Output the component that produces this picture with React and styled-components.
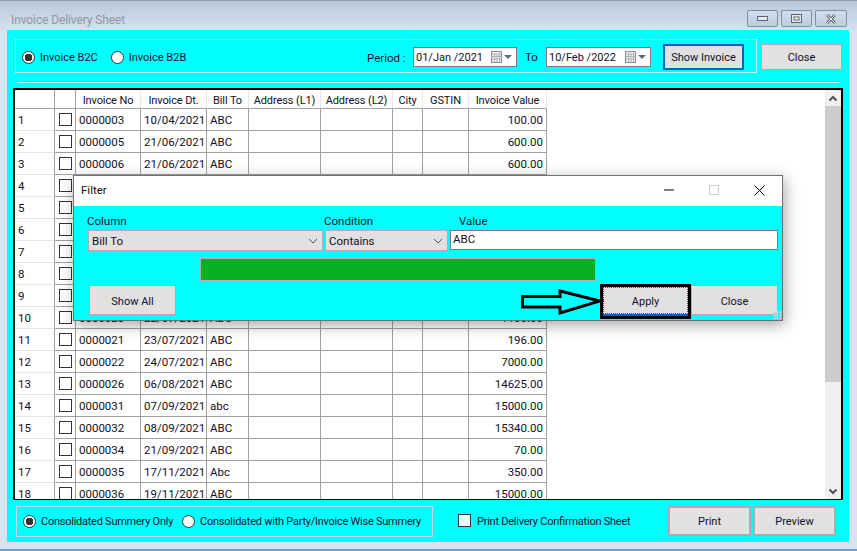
import React from 'react';
import styled, { createGlobalStyle } from 'styled-components';

const rows = [
    ['0000003', '10/04/2021', 'ABC', '100.00'],
    ['0000005', '21/06/2021', 'ABC', '600.00'],
    ['0000006', '21/06/2021', 'ABC', '600.00'],
    ['', '', '', ''],
    ['', '', '', ''],
    ['', '', '', ''],
    ['', '', '', ''],
    ['', '', '', ''],
    ['', '', '', ''],
    ['0000020', '22/07/2021', 'ABC', '1100.00'],
    ['0000021', '23/07/2021', 'ABC', '196.00'],
    ['0000022', '24/07/2021', 'ABC', '7000.00'],
    ['0000026', '06/08/2021', 'ABC', '14625.00'],
    ['0000031', '07/09/2021', 'abc', '15000.00'],
    ['0000032', '08/09/2021', 'ABC', '15340.00'],
    ['0000034', '21/09/2021', 'ABC', '70.00'],
    ['0000035', '17/11/2021', 'Abc', '350.00'],
    ['0000036', '19/11/2021', 'ABC', '15000.00'],
];

const columns = [
    { label: '', width: 40 },
    { label: '', width: 21 },
    { label: 'Invoice No', width: 65 },
    { label: 'Invoice Dt.', width: 66 },
    { label: 'Bill To', width: 42 },
    { label: 'Address (L1)', width: 72 },
    { label: 'Address (L2)', width: 72 },
    { label: 'City', width: 30 },
    { label: 'GSTIN', width: 46 },
    { label: 'Invoice Value', width: 78 },
];

const CalendarIcon = () => (
    <svg width="22" height="12" viewBox="0 0 22 12">
        <rect x="0.5" y="0.5" width="10" height="11" fill="#e8ecf0" stroke="#8a8f96" />
        <path d="M1 3h9M1 5.5h9M1 8h9M3.5 3v8M6 3v8M8.5 3v8" stroke="#b4b8be" strokeWidth="1" fill="none" />
        <path d="M13 4h8l-4 4z" fill="#5a6a80" />
    </svg>
);

const App = () => {
    return (
        <Window>
            <GlobalStyle />
            <TitleBar>
                <TitleText>Invoice Delivery Sheet</TitleText>
                <WindowButtons>
                    <WindowButton $width={31}>
                        <svg width="11" height="6" viewBox="0 0 11 6"><rect x="0.5" y="0.5" width="10" height="4" fill="#e4e9f0" stroke="#5a6472" /></svg>
                    </WindowButton>
                    <WindowButton $width={31}>
                        <svg width="11" height="10" viewBox="0 0 11 10"><rect x="0.5" y="0.5" width="10" height="8" fill="#e4e9f0" stroke="#5a6472" /><rect x="3" y="3" width="5" height="3" fill="#fff" stroke="#5a6472" strokeWidth="1" /></svg>
                    </WindowButton>
                    <WindowButton $width={32}>
                        <svg width="12" height="10" viewBox="0 0 12 10"><path d="M2 1l8 8M10 1L2 9" stroke="#5f6874" strokeWidth="2.6" fill="none" /><path d="M2 1l8 8M10 1L2 9" stroke="#eef1f5" strokeWidth="1" fill="none" /></svg>
                    </WindowButton>
                </WindowButtons>
            </TitleBar>

            <Client>
                <TopRow>
                    <GroupBox>
                        <Radio $checked />
                        <RadioLabel>Invoice B2C</RadioLabel>
                        <Radio $gap={13} />
                        <RadioLabel>Invoice B2B</RadioLabel>
                        <PeriodLabel>Period :</PeriodLabel>
                        <DateBox $width={104}>
                            <span>01/Jan /2021</span>
                            <CalendarIcon />
                        </DateBox>
                        <ToLabel>To</ToLabel>
                        <DateBox $width={105}>
                            <span>10/Feb /2022</span>
                            <CalendarIcon />
                        </DateBox>
                        <ShowInvoiceButton>Show Invoice</ShowInvoiceButton>
                    </GroupBox>
                    <CloseButton>Close</CloseButton>
                </TopRow>
                <Separator />

                <GridFrame>
                    <GridArea>
                        <InvoiceTable>
                            <colgroup>
                                {columns.map((col, index) => (
                                    <col key={index} style={{ width: col.width }} />
                                ))}
                            </colgroup>
                            <thead>
                                <tr>
                                    {columns.map((col, index) => (
                                        <HeaderCell key={index} $corner={index < 2}>{col.label}</HeaderCell>
                                    ))}
                                </tr>
                            </thead>
                            <tbody>
                                {rows.map((row, index) => (
                                    <tr key={index}>
                                        <RowHeader>{index + 1}</RowHeader>
                                        <Cell $center><CheckBox /></Cell>
                                        <Cell>{row[0]}</Cell>
                                        <Cell>{row[1]}</Cell>
                                        <Cell>{row[2]}</Cell>
                                        <Cell />
                                        <Cell />
                                        <Cell />
                                        <Cell />
                                        <Cell $right>{row[3]}</Cell>
                                    </tr>
                                ))}
                            </tbody>
                        </InvoiceTable>
                    </GridArea>
                    <ScrollBar>
                        <ScrollButton>
                            <svg width="10" height="7" viewBox="0 0 10 7"><path d="M1.5 5.5L5 2l3.5 3.5" stroke="#505050" strokeWidth="2" fill="none" /></svg>
                        </ScrollButton>
                        <ScrollThumb />
                        <ScrollTrack />
                        <ScrollButton>
                            <svg width="10" height="7" viewBox="0 0 10 7"><path d="M1.5 1.5L5 5l3.5-3.5" stroke="#505050" strokeWidth="2" fill="none" /></svg>
                        </ScrollButton>
                    </ScrollBar>
                </GridFrame>

                <BottomRow>
                    <SummaryBox>
                        <Radio $checked />
                        <SummaryLabel>Consolidated Summery Only</SummaryLabel>
                        <Radio $gap={9} />
                        <SummaryLabel>Consolidated with Party/Invoice Wise Summery</SummaryLabel>
                    </SummaryBox>
                    <PrintCheck />
                    <PrintCheckLabel>Print Delivery Confirmation Sheet</PrintCheckLabel>
                    <PrintButton $first>Print</PrintButton>
                    <PrintButton>Preview</PrintButton>
                </BottomRow>
            </Client>

            <Dialog>
                <DialogTitle>
                    <span>Filter</span>
                    <DialogControls>
                        <svg width="10" height="10" viewBox="0 0 10 10"><path d="M0 5h10" stroke="#000" strokeWidth="1" fill="none" /></svg>
                        <svg width="10" height="10" viewBox="0 0 10 10"><rect x="0.5" y="0.5" width="9" height="9" stroke="#ccc" fill="none" /></svg>
                        <svg width="11" height="11" viewBox="0 0 11 11"><path d="M0.5 0.5l10 10M10.5 0.5l-10 10" stroke="#000" strokeWidth="1" fill="none" /></svg>
                    </DialogControls>
                </DialogTitle>
                <DialogBody>
                    <FieldRow>
                        <Field $width={235}>
                            <FieldLabel>Column</FieldLabel>
                            <SelectBox>
                                Bill To
                                <svg width="10" height="6" viewBox="0 0 10 6"><path d="M1 1l4 4 4-4" stroke="#555" strokeWidth="1" fill="none" /></svg>
                            </SelectBox>
                        </Field>
                        <Field $width={123}>
                            <FieldLabel>Condition</FieldLabel>
                            <SelectBox>
                                Contains
                                <svg width="10" height="6" viewBox="0 0 10 6"><path d="M1 1l4 4 4-4" stroke="#555" strokeWidth="1" fill="none" /></svg>
                            </SelectBox>
                        </Field>
                        <Field $width={328}>
                            <FieldLabel $indent={9}>Value</FieldLabel>
                            <ValueBox>ABC</ValueBox>
                        </Field>
                    </FieldRow>
                    <ProgressBar />
                    <ButtonRow>
                        <DialogButton $width={87}>Show All</DialogButton>
                        <RightButtons>
                            <ApplyButton><ApplyInner>Apply</ApplyInner></ApplyButton>
                            <DialogButton $width={87}>Close</DialogButton>
                        </RightButtons>
                    </ButtonRow>
                    <Grip />
                </DialogBody>
            </Dialog>

            <ArrowMark width="84" height="28" viewBox="0 0 84 28">
                <path d="M2.5 7.5H40V2l40 10-40 12v-6H2.5z" fill="none" stroke="#000" strokeWidth="3" />
            </ArrowMark>
        </Window>
    );
};

export default App;

const GlobalStyle = createGlobalStyle`
    html, body {
        margin: 0;
        padding: 0;
        background: #d9e4f1;
    }

    body {
        font-family: Roboto, "Liberation Sans", Arial, sans-serif;
        font-size: 11px;
        color: #10102a;
    }
`;

const Window = styled.div`
    position: relative;
    display: flex;
    flex-direction: column;
    width: 857px;
    height: 551px;
    overflow: hidden;
    background: #d9e4f1;
    box-sizing: border-box;
    border-bottom: 2px solid #6a9fd8;
`;

const TitleBar = styled.div`
    display: flex;
    align-items: flex-start;
    justify-content: space-between;
    height: 30px;
    flex-shrink: 0;
    padding: 9px 10px 0 11px;
    box-sizing: border-box;
    background: linear-gradient(#b9c8da, #d6e1ee);
    border-top: 1px solid #8d9aab;
`;

const TitleText = styled.div`
    margin-top: 3px;
    font-size: 12px;
    letter-spacing: -0.1px;
    color: #8f989f;
`;

const WindowButtons = styled.div`
    display: flex;
    gap: 3px;
`;

const WindowButton = styled.div`
    display: flex;
    align-items: center;
    justify-content: center;
    width: ${({ $width }) => $width}px;
    height: 17px;
    box-sizing: border-box;
    border: 1px solid #7f90a6;
    border-radius: 2px;
    background: linear-gradient(#d3deeb, #bdcbdc);
`;

const Client = styled.div`
    display: flex;
    flex-direction: column;
    width: 842px;
    height: 512px;
    margin-left: 7px;
    padding: 9px 6px 0;
    box-sizing: border-box;
    background: #00ffff;
`;

const TopRow = styled.div`
    display: flex;
    align-items: flex-start;
    margin-left: 2px;
`;

const GroupBox = styled.div`
    display: flex;
    align-items: center;
    width: 742px;
    height: 34px;
    padding: 2px 12px 0 6px;
    box-sizing: border-box;
    border: 1px solid #c4f0f0;
`;

const Radio = styled.span`
    position: relative;
    display: inline-block;
    flex-shrink: 0;
    width: 13px;
    height: 13px;
    margin-left: ${({ $gap }) => $gap || 0}px;
    box-sizing: border-box;
    border: 1px solid #333;
    border-radius: 50%;
    background: ${({ $checked }) => ($checked ? 'radial-gradient(circle, #333 0 3.6px, #fff 4px)' : '#fff')};
`;

const RadioLabel = styled.span`
    margin-left: 5px;
    white-space: nowrap;
`;

const PeriodLabel = styled.span`
    width: 46px;
    margin: 1px 0 0 auto;
    font-size: 11.5px;
    white-space: nowrap;
`;

const ToLabel = styled.span`
    width: 29px;
    padding-left: 8px;
    box-sizing: border-box;
    font-size: 11.5px;
`;

const DateBox = styled.div`
    display: flex;
    align-items: center;
    justify-content: space-between;
    width: ${({ $width }) => $width}px;
    height: 20px;
    padding: 0 3px 0 2px;
    box-sizing: border-box;
    border: 1px solid #7a7a7a;
    background: #fff;
    white-space: nowrap;
`;

const ButtonBase = styled.div`
    display: flex;
    align-items: center;
    justify-content: center;
    box-sizing: border-box;
    border: 1px solid #adadad;
    background: #e1e1e1;
    white-space: nowrap;
`;

const ShowInvoiceButton = styled(ButtonBase)`
    width: 81px;
    height: 26px;
    margin-left: 12px;
    padding-top: 1px;
    border: 2px solid #0a63c4;
`;

const CloseButton = styled(ButtonBase)`
    width: 81px;
    height: 26px;
    margin: 5px 0 0 4px;
`;

const Separator = styled.div`
    height: 1px;
    margin: 8px 3px 6px 4px;
    background: #6fb8bc;
    box-shadow: 0 1px 0 #c8ffff;
`;

const GridFrame = styled.div`
    display: flex;
    height: 412px;
    flex-shrink: 0;
    box-sizing: border-box;
    border: 2px solid #000;
    border-bottom-width: 1px;
    background: #fff;
`;

const GridArea = styled.div`
    flex: 1;
    overflow: hidden;
`;

const InvoiceTable = styled.table`
    table-layout: fixed;
    width: 532px;
    border-collapse: separate;
    border-spacing: 0;
`;

const HeaderCell = styled.th`
    height: 19px;
    padding: 2px 0 0;
    box-sizing: border-box;
    font-weight: normal;
    font-size: 11px;
    letter-spacing: -0.1px;
    white-space: nowrap;
    text-align: center;
    color: #10102a;
    background: #fff;
    border-bottom: 1px solid #a0a0a0;
    border-right: 1px solid ${({ $corner }) => ($corner ? '#a0a0a0' : '#e6e6e6')};
`;

const Cell = styled.td`
    height: 22px;
    padding: ${({ $center }) => ($center ? '0' : '1px 3px 0')};
    box-sizing: border-box;
    overflow: hidden;
    font-size: 11.5px;
    white-space: nowrap;
    text-align: ${({ $right }) => ($right ? 'right' : 'left')};
    border-right: 1px solid #a0a0a0;
    border-bottom: 1px solid #a0a0a0;
`;

const RowHeader = styled.td`
    height: 22px;
    padding: 1px 0 0 3px;
    box-sizing: border-box;
    font-size: 11.5px;
    background: #fff;
    border-right: 1px solid #a0a0a0;
    border-bottom: 1px solid #e6e6e6;
`;

const CheckBox = styled.div`
    width: 13px;
    height: 13px;
    margin: 0 auto;
    box-sizing: border-box;
    border: 1px solid #333;
    background: #fff;
`;

const ScrollBar = styled.div`
    display: flex;
    flex-direction: column;
    width: 16px;
    flex-shrink: 0;
    background: #f0f0f0;
`;

const ScrollButton = styled.div`
    display: flex;
    align-items: center;
    justify-content: center;
    height: 16px;
    flex-shrink: 0;
`;

const ScrollThumb = styled.div`
    height: 276px;
    flex-shrink: 0;
    background: #cdcdcd;
`;

const ScrollTrack = styled.div`
    flex: 1;
`;

const BottomRow = styled.div`
    display: flex;
    align-items: flex-start;
    margin-top: 6px;
    margin-left: 3px;
`;

const SummaryBox = styled.div`
    display: flex;
    align-items: center;
    width: 417px;
    height: 31px;
    padding-left: 6px;
    box-sizing: border-box;
    border: 1px solid #c8d8d8;
`;

const SummaryLabel = styled.span`
    margin-left: 5px;
    letter-spacing: -0.25px;
    white-space: nowrap;
`;

const PrintCheck = styled(CheckBox)`
    flex-shrink: 0;
    margin: 8px 0 0 25px;
`;

const PrintCheckLabel = styled.span`
    margin: 9px 0 0 6px;
    width: 191px;
    letter-spacing: -0.25px;
    white-space: nowrap;
`;

const PrintButton = styled(ButtonBase)`
    width: 83px;
    height: 30px;
    margin-left: ${({ $first }) => ($first ? '0' : '2px')};
    border-width: 2px;
`;

const Dialog = styled.div`
    position: absolute;
    left: 73px;
    top: 175px;
    width: 710px;
    height: 146px;
    display: flex;
    flex-direction: column;
    box-sizing: border-box;
    border: 1px solid #707070;
    background: #00ffff;
    font-size: 11.5px;
    box-shadow: 2px 4px 14px rgba(0, 0, 0, 0.35);
`;

const DialogTitle = styled.div`
    display: flex;
    align-items: center;
    justify-content: space-between;
    height: 30px;
    flex-shrink: 0;
    padding: 0 17px 2px 7px;
    box-sizing: border-box;
    background: #fff;
    color: #111;
`;

const DialogControls = styled.div`
    display: flex;
    align-items: center;
    gap: 35px;
`;

const DialogBody = styled.div`
    position: relative;
    flex: 1;
    padding: 9px 4px 0 14px;
    box-sizing: border-box;
`;

const FieldRow = styled.div`
    display: flex;
    gap: 2px;
`;

const Field = styled.div`
    width: ${({ $width }) => $width}px;
    flex-shrink: 0;
`;

const FieldLabel = styled.div`
    height: 15px;
    margin-left: ${({ $indent }) => $indent || -1}px;
    line-height: 13px;
    white-space: nowrap;
`;

const SelectBox = styled.div`
    display: flex;
    align-items: center;
    justify-content: space-between;
    height: 21px;
    padding: 0 4px 0 3px;
    box-sizing: border-box;
    border: 1px solid #adadad;
    background: #e1e1e1;
`;

const ValueBox = styled.div`
    height: 20px;
    padding-left: 2px;
    line-height: 17px;
    box-sizing: border-box;
    border: 1px solid #7a7a7a;
    background: #fff;
`;

const ProgressBar = styled.div`
    width: 396px;
    height: 23px;
    margin: 7px 0 0 112px;
    box-sizing: border-box;
    border: 1px solid #b0b0b0;
    background: #06b025;
`;

const ButtonRow = styled.div`
    display: flex;
    align-items: flex-start;
    justify-content: space-between;
    margin: 4px 0 0 1px;
    font-size: 11px;
`;

const RightButtons = styled.div`
    display: flex;
`;

const DialogButton = styled(ButtonBase)`
    width: ${({ $width }) => $width}px;
    height: 30px;
    padding-top: 2px;
`;

const ApplyButton = styled.div`
    width: 91px;
    height: 35px;
    margin-top: -1px;
    box-sizing: border-box;
    border: 3px solid #000;
    background: #0a5fc0;
`;

const ApplyInner = styled(ButtonBase)`
    width: 85px;
    height: 27px;
    padding-top: 1px;
    border: 1px dotted #a02040;
`;

const Grip = styled.div`
    position: absolute;
    right: 1px;
    bottom: 1px;
    width: 8px;
    height: 8px;
    background-image: radial-gradient(#c8d0d0 1px, transparent 1.2px);
    background-size: 3px 3px;
`;

const ArrowMark = styled.svg`
    position: absolute;
    left: 520px;
    top: 289px;
`;
